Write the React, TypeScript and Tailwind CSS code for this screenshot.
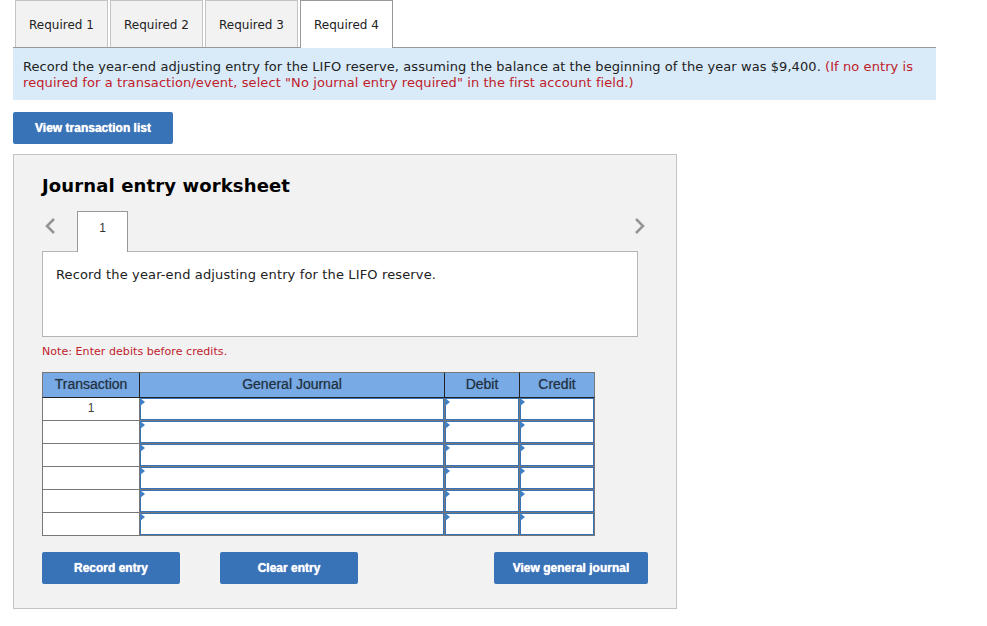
const inputRows = [0, 1, 2, 3, 4, 5];

const Tab = ({ label, active }: { label: string; active?: boolean }) => (
    <div
        className={
            active
                ? "w-[93px] h-[48px] -mb-px z-10 flex items-center justify-center bg-white border border-b-0 border-[#999999] text-[#222222]"
                : "w-[93px] h-[47px] pt-[1px] flex items-center justify-center bg-[#f2f2f2] border border-b-0 border-[#c4c4c4] text-[#222222]"
        }
    >
        {label}
    </div>
);

const ActionButton = ({ label, width }: { label: string; width: string }) => (
    <button className={`${width} h-[32px] rounded-[2px] bg-[#3873b8] text-white text-[12px] font-bold font-['Liberation_Sans',sans-serif] [text-shadow:0_0_1px_#fff]`}>
        {label}
    </button>
);

const HeaderCell = ({ label, last }: { label: string; last?: boolean }) => (
    <div
        className={
            last
                ? "pb-[2px] flex items-center justify-center bg-[#78aae6] border-t border-r border-t-[#777777] border-r-[#777777] border-b border-b-[#222222] text-[#22303f] [text-shadow:0_0_1px_#22303f80]"
                : "pb-[2px] flex items-center justify-center bg-[#78aae6] border-t border-r border-t-[#777777] border-r-[#222222] border-b border-b-[#222222] text-[#22303f] [text-shadow:0_0_1px_#22303f80]"
        }
    >
        {label}
    </div>
);

const EntryCell = () => (
    <div className="border-r border-b border-[#777777]">
        <div className="relative h-full border border-[#3873b8] bg-white">
            <span className="absolute -left-px -top-px w-0 h-0 border-y-[4px] border-y-transparent border-l-[5px] border-l-[#3f7fc4]" />
        </div>
    </div>
);

export default function App() {
    return (
        <div className="w-[987px] h-[626px] bg-white font-['DejaVu_Sans',sans-serif] text-[#222222] overflow-hidden">
            <div className="flex gap-[2px] pl-[15px] text-[12px]">
                <Tab label="Required 1" />
                <Tab label="Required 2" />
                <Tab label="Required 3" />
                <Tab label="Required 4" active />
            </div>

            <div className="ml-[13px] w-[923px] h-[53px] border-t border-[#999999] bg-[#d9ebf9] px-[10px] pt-[11px] text-[13px] leading-[16px] tracking-[0.07px]">
                Record the year-end adjusting entry for the LIFO reserve, assuming the balance at the beginning of the year was $9,400.{" "}
                <span className="text-[#c0202a] tracking-[0.085px]">
                    (If no entry is required for a transaction/event, select "No journal entry required" in the first account field.)
                </span>
            </div>

            <div className="ml-[13px] mt-[12px]">
                <ActionButton label="View transaction list" width="w-[160px]" />
            </div>

            <div className="ml-[13px] mt-[10px] w-[664px] h-[455px] border border-[#c4c4c4] bg-[#f2f2f2] px-[28px] pt-[19px]">
                <h2 className="text-[18px] leading-[24px] font-bold tracking-[0.13px] text-black">Journal entry worksheet</h2>

                <div className="relative mt-[13px] flex h-[41px] pl-[35px]">
                    <svg className="absolute left-[2px] top-[6px]" width="12" height="18" viewBox="0 0 12 18" fill="none" stroke="#949494" strokeWidth="2.5">
                        <path d="M10 2 3 9l7 7" />
                    </svg>
                    <div className="z-10 w-[51px] h-[41px] pb-[8px] flex items-center justify-center bg-white border border-b-0 border-[#999999] text-[12px] text-[#333333] font-['Liberation_Sans',sans-serif]">
                        1
                    </div>
                    <svg className="absolute left-[592px] top-[6px]" width="12" height="18" viewBox="0 0 12 18" fill="none" stroke="#949494" strokeWidth="2.5">
                        <path d="m2 2 7 7-7 7" />
                    </svg>
                </div>

                <div className="-mt-px w-[596px] h-[86px] border border-[#b5b5b5] bg-white px-[13px] pt-[14px] text-[13px] leading-[17px] tracking-[0.14px]">
                    Record the year-end adjusting entry for the LIFO reserve.
                </div>

                <p className="mt-[8px] text-[11px] leading-[14px] tracking-[0.06px] text-[#c0202a]">Note: Enter debits before credits.</p>

                <div className="mt-[13px] w-[553px] grid grid-cols-[98px_305px_75px_75px] grid-rows-[26px_repeat(6,23px)] font-['Liberation_Sans',sans-serif] text-[14px] leading-[16px]">
                    <div className="pb-[2px] flex items-center justify-center bg-[#78aae6] border-t border-l border-r border-b border-t-[#777777] border-l-[#777777] border-r-[#222222] border-b-[#222222] text-[#22303f] [text-shadow:0_0_1px_#22303f80]">
                        Transaction
                    </div>
                    <HeaderCell label="General Journal" />
                    <HeaderCell label="Debit" />
                    <HeaderCell label="Credit" last />
                    {inputRows.map((row) => (
                        <div key={row} className="contents">
                            <div className="flex justify-center bg-white border-l border-r border-b border-[#777777] text-[12px] text-[#444444] pt-[2px]">
                                {row === 0 ? "1" : ""}
                            </div>
                            <EntryCell />
                            <EntryCell />
                            <EntryCell />
                        </div>
                    ))}
                </div>

                <div className="mt-[16px] w-[606px] flex justify-between">
                    <div className="flex gap-[40px]">
                        <ActionButton label="Record entry" width="w-[138px]" />
                        <ActionButton label="Clear entry" width="w-[138px]" />
                    </div>
                    <ActionButton label="View general journal" width="w-[154px]" />
                </div>
            </div>
        </div>
    );
}
